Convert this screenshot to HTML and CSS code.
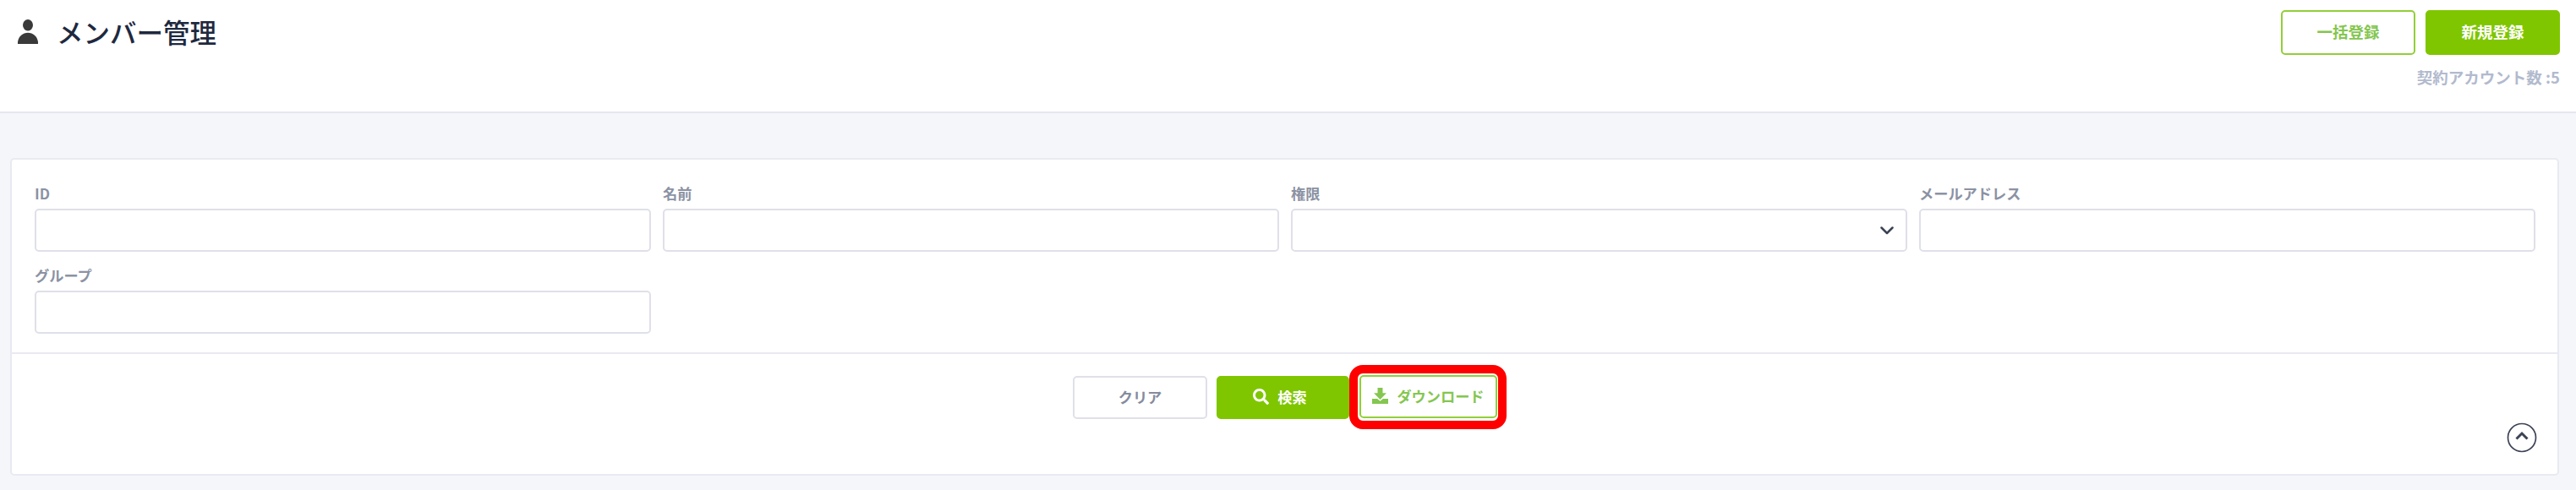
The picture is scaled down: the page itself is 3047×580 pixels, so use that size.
FILE: index.html
```html
<!DOCTYPE html>
<html lang="ja">
<head>
	<meta charset="utf-8">
	<meta name="viewport" content="width=device-width, initial-scale=1">
	<title>メンバー管理</title>
	<link rel="stylesheet" href="styles.css">
</head>

<body>
	<header class="page-header">
		<h1 class="page-title">
			<svg class="icon-user" viewBox="0 0 24 30">
				<ellipse cx="12" cy="6.7" rx="6" ry="6.7"/>
				<path d="M0 29V26.500C1 20 6 15.800 12 15.800S23 20 24 26.500V29z"/>
			</svg>
			<span>メンバー管理</span>
		</h1>
		<div class="header-side">
			<div class="header-buttons">
				<button class="btn btn-outline">一括登録</button>
				<button class="btn btn-primary">新規登録</button>
			</div>
			<p class="account-count">契約アカウント数 :5</p>
		</div>
	</header>

	<main class="card">
		<form class="search-form">
			<div class="field">
				<label for="member-id">ID</label>
				<input type="text" id="member-id">
			</div>
			<div class="field">
				<label for="name">名前</label>
				<input type="text" id="name">
			</div>
			<div class="field">
				<label for="role">権限</label>
				<div class="select" id="role">
					<svg class="icon-down" viewBox="0 0 16 10"><path d="M1.500 1.500L8 8l6.500-6.500"/></svg>
				</div>
			</div>
			<div class="field">
				<label for="mail">メールアドレス</label>
				<input type="text" id="mail">
			</div>
			<div class="field">
				<label for="group">グループ</label>
				<input type="text" id="group">
			</div>
		</form>

		<div class="card-footer">
			<div class="actions">
				<button class="btn btn-clear">クリア</button>
				<button class="btn btn-primary btn-search">
					<svg class="icon" viewBox="0 0 512 512"><path d="M505 442.700L405.300 343c-4.500-4.500-10.600-7-17-7H372c27.600-35.300 44-79.700 44-128C416 93.100 322.900 0 208 0S0 93.100 0 208s93.100 208 208 208c48.300 0 92.700-16.400 128-44v16.300c0 6.400 2.500 12.500 7 17l99.700 99.700c9.400 9.400 24.600 9.400 33.900 0l28.300-28.300c9.400-9.400 9.400-24.600.1-34zM208 336c-70.700 0-128-57.200-128-128 0-70.700 57.200-128 128-128 70.700 0 128 57.200 128 128 0 70.700-57.200 128-128 128z"/></svg>
					検索
				</button>
				<div class="highlight">
					<button class="btn btn-outline btn-download">
						<svg class="icon" viewBox="0 0 512 512"><path d="M176 0h160v170h120L256 375 56 170h120zM0 352h165l91 75 91-75h165v160H0z"/></svg>
						ダウンロード
					</button>
				</div>
			</div>
			<button class="toggle">
				<svg viewBox="0 0 36 36"><circle cx="18" cy="18" r="16.500"/><path d="M11.500 19.500l6.500-6.500 6.500 6.500"/></svg>
			</button>
		</div>
	</main>
</body>
</html>
```
FILE: styles.css
```css
* {
	box-sizing: border-box;
}

body {
	margin: 0;
	height: 580px;
	overflow: hidden;
	background: #f4f6fa;
	font-family: "Noto Sans CJK JP", sans-serif;
	color: #1e293f;
}

button {
	font-family: inherit;
	cursor: pointer;
}

.page-header {
	display: flex;
	justify-content: space-between;
	height: 134px;
	padding: 12px 19px 0 21px;
	background: #fff;
	border-bottom: 2px solid #e4e6f1;
}

.page-title {
	display: flex;
	align-items: center;
	gap: 22px;
	height: 52px;
	margin: 0;
	font-size: 31.500px;
	font-weight: 500;
}

.page-title span {
	padding-bottom: 2px;
}

.icon-user {
	width: 24px;
	height: 30px;
	fill: #3a3a3a;
}

.header-buttons {
	display: flex;
	gap: 12px;
}

.account-count {
	margin: 12px 0 0;
	font-size: 18.500px;
	line-height: 28px;
	font-weight: 700;
	text-align: right;
	color: #b2bacd;
}

.btn {
	display: flex;
	justify-content: center;
	align-items: center;
	width: 159px;
	height: 53px;
	padding: 0 0 4px;
	border: 2px solid #7fc600;
	border-radius: 5px;
	font-size: 18.500px;
	font-weight: 700;
	background: #fff;
}

.btn-outline {
	color: #84c650;
	border-color: #92cf38;
}

.btn-primary {
	color: #fff;
	background: #7fc600;
}

.card {
	height: 376px;
	margin: 53px 20px 0 12px;
	background: #fff;
	border: 2px solid #e9eaf1;
	border-radius: 5px;
}

.search-form {
	display: grid;
	grid-template-columns: repeat(4, 1fr);
	column-gap: 14px;
	row-gap: 15px;
	height: 230px;
	padding: 27px 26px 0 27px;
	align-content: start;
	border-bottom: 2px solid #e9eaf1;
}

.field {
	display: flex;
	flex-direction: column;
}

.field label {
	height: 31px;
	line-height: 25px;
	font-size: 17.200px;
	font-weight: 700;
	color: #8b92a3;
}

.field input,
.select {
	width: 100%;
	height: 51px;
	padding: 0 14px;
	border: 2px solid #dfe0e9;
	border-radius: 5px;
	background: #fff;
}

.select {
	display: flex;
	justify-content: flex-end;
	align-items: center;
}

.icon-down {
	width: 16px;
	height: 10px;
	fill: none;
	stroke: #3b4353;
	stroke-width: 2.500;
	stroke-linecap: round;
	stroke-linejoin: round;
}

.card-footer {
	display: flex;
	flex-direction: column;
	padding: 13px 26px 0;
}

.actions {
	display: flex;
	align-items: center;
	justify-content: center;
	padding-left: 12px;
}

.card-footer .btn {
	height: 51px;
	padding-bottom: 2px;
	font-size: 17.200px;
}

.card-footer .btn-clear {
	margin-right: 11px;
	color: #858b9d;
	border-color: #dfe0e9;
}

.card-footer .btn-search {
	width: 157px;
	gap: 10px;
	padding-right: 7px;
}

.icon {
	width: 19px;
	height: 19px;
	fill: currentColor;
}

/* red frame round the download button */
.highlight {
	width: 186px;
	height: 76px;
	padding: 2px 1px 2px 2px;
	border: 10.500px solid #f00;
	border-radius: 16px;
}

.card-footer .btn-download {
	width: 163px;
	gap: 10px;
}

.toggle {
	align-self: flex-end;
	width: 36px;
	height: 36px;
	margin: -8px -2px 0 0;
	padding: 0;
	border: 0;
	background: none;
}

.toggle svg {
	display: block;
	fill: none;
	stroke: #3c4354;
	stroke-width: 1.700;
}

.toggle path {
	stroke-width: 3;
}
```
